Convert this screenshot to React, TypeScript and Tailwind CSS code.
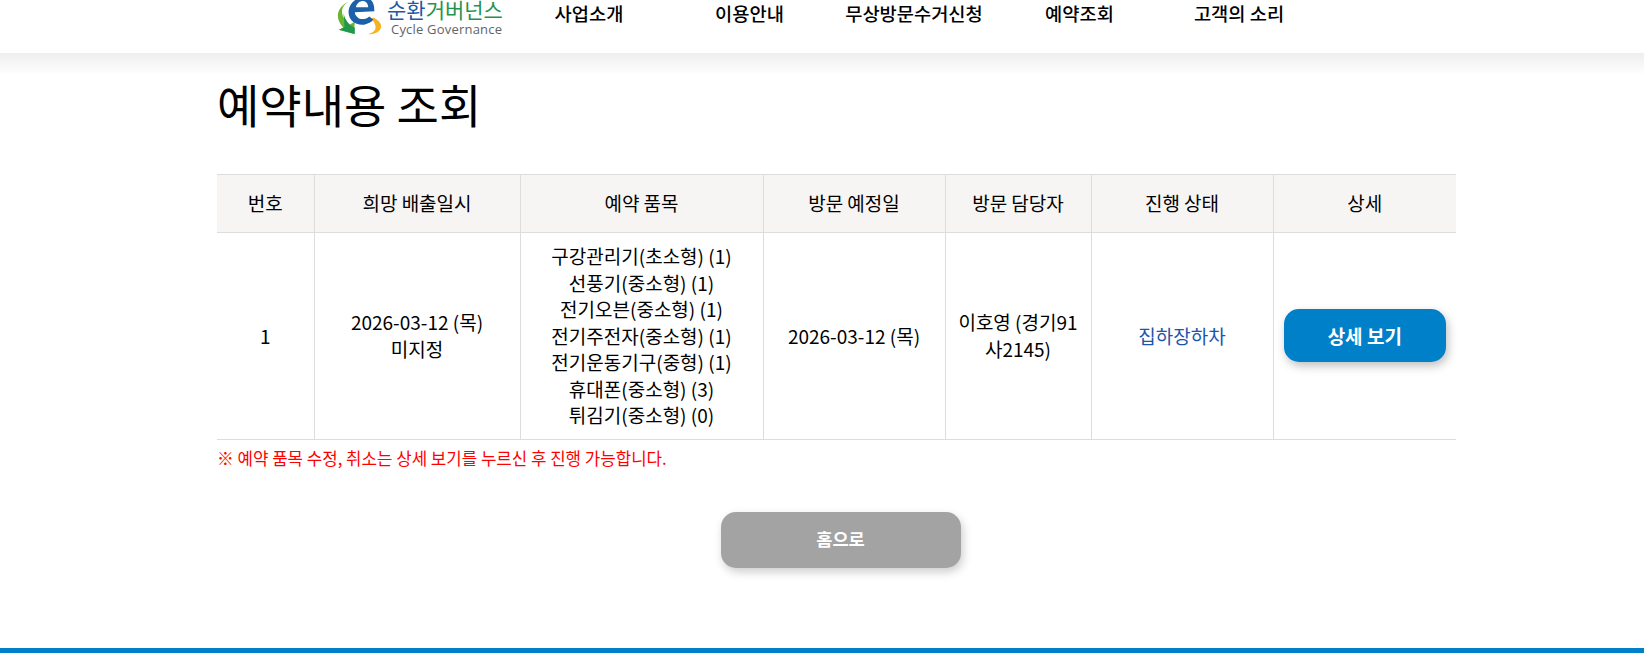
const navItems = [
  { label: '사업소개', width: 'w-[160px]' },
  { label: '이용안내', width: 'w-[161px]' },
  { label: '무상방문수거신청', width: 'w-[168px]' },
  { label: '예약조회', width: 'w-[163px]' },
  { label: '고객의 소리', width: 'w-[156px]' },
]

const items = [
  '구강관리기(초소형) (1)',
  '선풍기(중소형) (1)',
  '전기오븐(중소형) (1)',
  '전기주전자(중소형) (1)',
  '전기운동기구(중형) (1)',
  '휴대폰(중소형) (3)',
  '튀김기(중소형) (0)',
]

const headers = ['번호', '희망 배출일시', '예약 품목', '방문 예정일', '방문 담당자', '진행 상태', '상세']

const Logo = () => (
  <div className="flex w-[174px] h-[53px]">
    <svg width="52" height="37" viewBox="0 0 50 36" className="shrink-0">
      <path d="M14 1 C4 6 4 16 14 24 L19 21 L18 33 L3 29 L8 27 C-1 18 1 7 14 1 Z" fill="#6cb42e" />
      <path d="M8 13 C10 21 14 25 19 27 L19 33 L4 29 L9 26 Z" fill="#1f9a4c" />
      <path d="M37 17 C43 20 46 24 44 28 C42 32 36 34 32 33 C37 32 40 29 39 25 C38 22 37 20 35 19 Z" fill="#f6b223" />
      <path d="M31 -2 C22 -4 14 2 13 10 C12 19 19 25 28 24 C32 23 35 22 37 19 L33 16 C30 19 26 19 23 18 C20 16 19 14 19 12 L38 11 C38 3 36 0 31 -2 Z M20 7 C21 3 24 1 27 1 C30 1 32 4 32 7 Z" fill="#1c5faa" fillRule="evenodd" />
    </svg>
    <div className="flex flex-col">
      <span className="text-[21px] leading-[18px] whitespace-nowrap">
        <span className="text-[#1d5ba6]">순환</span>
        <span className="text-[#1f9450]">거버넌스</span>
      </span>
      <span className="mt-[3px] ml-[4px] text-[13px] leading-[16px] text-[#5f6468] font-['Open_Sans',sans-serif] whitespace-nowrap tracking-[0.2px]">
        Cycle Governance
      </span>
    </div>
  </div>
)

const App = () => {
  return (
    <div className="h-[653px] overflow-hidden flex flex-col bg-white text-black font-['Noto_Sans_CJK_KR',sans-serif]">

      <header className="h-[53px] shrink-0 flex pl-[335px] bg-white">
        <Logo />
        <nav className="flex h-[26px]">
          {navItems.map(item => (
            <a key={item.label} className={`${item.width} text-center text-[18.7px] font-medium leading-[26px] whitespace-nowrap`}>
              {item.label}
            </a>
          ))}
        </nav>
      </header>

      <main className="flex-1 bg-gradient-to-b from-[#eeeeee] to-white to-[22px] bg-no-repeat">
        <div className="w-[1239px] ml-[217px]">
          <h1 className="pt-[20px] pb-[2px] text-[46px] leading-[60px] font-normal">예약내용 조회</h1>

          <table className="mt-[39px] w-full table-fixed border-collapse text-[19px] leading-[26.5px] text-center">
            <colgroup>
              <col className="w-[97px]" />
              <col className="w-[206px]" />
              <col className="w-[243px]" />
              <col className="w-[182px]" />
              <col className="w-[146px]" />
              <col className="w-[182px]" />
              <col />
            </colgroup>
            <thead>
              <tr className="bg-[#f6f5f4] h-[58px]">
                {headers.map((h, i) => (
                  <th key={h} className={`font-normal border-y border-[#dddddd] ${i > 0 ? 'border-l' : ''}`}>{h}</th>
                ))}
              </tr>
            </thead>
            <tbody>
              <tr className="border-b border-[#dddddd]">
                <td>1</td>
                <td className="border-l border-[#dddddd]">2026-03-12 (목)<br />미지정</td>
                <td className="border-l border-[#dddddd] py-[10px]">
                  {items.map(t => <div key={t}>{t}</div>)}
                </td>
                <td className="border-l border-[#dddddd]">2026-03-12 (목)</td>
                <td className="border-l border-[#dddddd] px-[10px]">이호영 (경기91 사2145)</td>
                <td className="border-l border-[#dddddd] text-[#1b55ac]">집하장하차</td>
                <td className="border-l border-[#dddddd] px-[10px]">
                  <button className="w-[162px] h-[53px] rounded-[15px] bg-[#0080c8] text-white font-bold shadow-[2px_4px_10px_rgba(0,0,0,0.25)]">
                    상세 보기
                  </button>
                </td>
              </tr>
            </tbody>
          </table>

          <p className="mt-[6px] text-[16.8px] leading-[24px] text-[#ff0000]">※ 예약 품목 수정, 취소는 상세 보기를 누르신 후 진행 가능합니다.</p>

          <div className="flex justify-center mt-[42px] pl-[8px]">
            <button className="w-[240px] h-[56px] rounded-[15px] bg-[#a3a3a3] text-white text-[17.6px] font-bold shadow-[2px_4px_10px_rgba(0,0,0,0.2)]">
              홈으로
            </button>
          </div>
        </div>
      </main>

      <footer className="h-[5px] shrink-0 bg-[#0080c8]" />
    </div>
  )
}

export default App
